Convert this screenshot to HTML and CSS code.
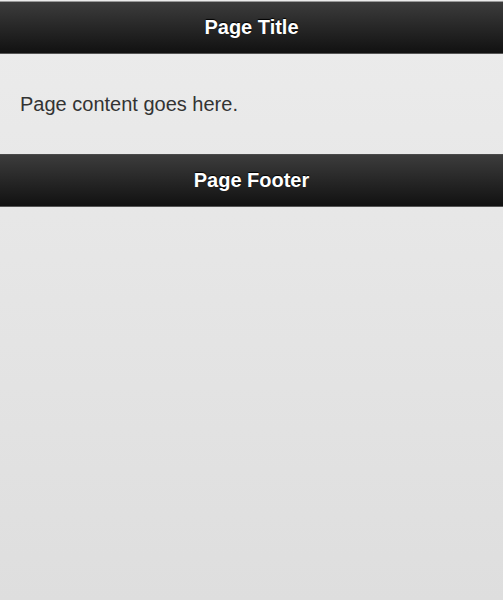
FILE: index.html
```html
<!DOCTYPE html>
<html>
<head>
<meta charset="utf-8">
<link rel="stylesheet" href="styles.css">
</head>
<body>
<div class="page">
  <header class="bar">
    <h1 class="bar-title">Page Title</h1>
  </header>
  <main class="content">
    <p class="text">Page content goes here.</p>
  </main>
  <footer class="bar">
    <h4 class="bar-title">Page Footer</h4>
  </footer>
</div>
</body>
</html>
```
FILE: styles.css
```css
html, body {
  margin: 0;
  padding: 0;
  height: 100%;
}
body {
  background: linear-gradient(#ececec, #dedede);
  font-family: "Liberation Sans", Arial, Helvetica, sans-serif;
  color: #333;
}
.page {
  min-height: 100%;
}
.bar {
  height: 51px;
  border-top: 1px solid #4a4a4a;
  border-bottom: 1px solid #555;
  background: linear-gradient(#3c3c3c, #111);
  display: flex;
  align-items: center;
  justify-content: center;
}
header.bar {
  margin-top: 1px;
  border-top-color: #9a9a9a;
}
.bar-title {
  margin: 0;
  font-size: 20px;
  font-weight: bold;
  color: #fff;
  text-shadow: 0 -1px 1px #000;
}
.content {
  padding: 19px 20px;
}
.text {
  margin: 20px 0;
  font-size: 20px;
  line-height: 22px;
  color: #333;
}
```
